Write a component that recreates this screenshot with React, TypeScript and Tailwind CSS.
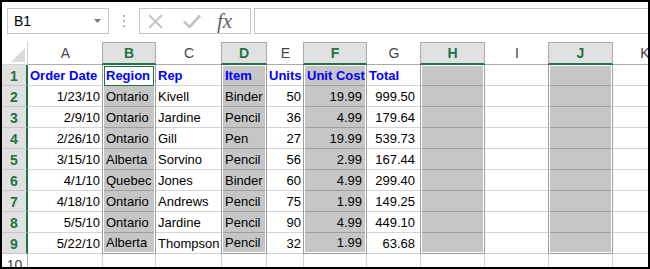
import React from 'react';

type Col = {
  key: string;
  width: string;
  sel: boolean;
  align: 'left' | 'right';
  pad: string;
};

const cols: Col[] = [
  { key: 'A', width: 'w-[75px]', sel: false, align: 'right', pad: 'pr-[2px]' },
  { key: 'B', width: 'w-[54px] -ml-px', sel: true, align: 'left', pad: 'pl-[2px]' },
  { key: 'C', width: 'w-[66px]', sel: false, align: 'left', pad: 'pl-[2px]' },
  { key: 'D', width: 'w-[46px] -ml-px', sel: true, align: 'left', pad: 'pl-[2px]' },
  { key: 'E', width: 'w-[37px]', sel: false, align: 'right', pad: 'pr-[2px]' },
  { key: 'F', width: 'w-[64px] -ml-px', sel: true, align: 'right', pad: 'pr-[3px]' },
  { key: 'G', width: 'w-[54px]', sel: false, align: 'right', pad: 'pr-[5px]' },
  { key: 'H', width: 'w-[65px] -ml-px', sel: true, align: 'right', pad: 'pr-[3px]' },
  { key: 'I', width: 'w-[64px]', sel: false, align: 'left', pad: 'pl-[2px]' },
  { key: 'J', width: 'w-[65px] -ml-px', sel: true, align: 'left', pad: 'pl-[2px]' },
  { key: 'K', width: 'w-[64px]', sel: false, align: 'left', pad: 'pl-[2px]' },
];

const titles = ['Order Date', 'Region', 'Rep', 'Item', 'Units', 'Unit Cost', 'Total'];

const rows = [
  ['1/23/10', 'Ontario', 'Kivell', 'Binder', '50', '19.99', '999.50'],
  ['2/9/10', 'Ontario', 'Jardine', 'Pencil', '36', '4.99', '179.64'],
  ['2/26/10', 'Ontario', 'Gill', 'Pen', '27', '19.99', '539.73'],
  ['3/15/10', 'Alberta', 'Sorvino', 'Pencil', '56', '2.99', '167.44'],
  ['4/1/10', 'Quebec', 'Jones', 'Binder', '60', '4.99', '299.40'],
  ['4/18/10', 'Ontario', 'Andrews', 'Pencil', '75', '1.99', '149.25'],
  ['5/5/10', 'Ontario', 'Jardine', 'Pencil', '90', '4.99', '449.10'],
  ['5/22/10', 'Alberta', 'Thompson', 'Pencil', '32', '1.99', '63.68'],
];

// heights inside a selected block: white inset eats a pixel at top and bottom
const selHeights = ['h-[20px]', 'h-[21px]', 'h-[21px]', 'h-[21px]', 'h-[21px]', 'h-[21px]', 'h-[21px]', 'h-[21px]', 'h-[19px]'];

const cellText = (ci: number, ri: number) => {
  if (ci > 6) return '';
  if (ri === 0) return titles[ci];
  return rows[ri - 1][ci];
};

const Cell = ({ col, ci, ri }: { col: Col; ci: number; ri: number }) => {
  const text = cellText(ci, ri);
  const header = ri === 0;
  return (
    <span
      className={`block w-full whitespace-nowrap overflow-visible ${
        header ? 'text-left pl-[2px] font-bold text-[#0000ff]' : `${col.align === 'right' ? 'text-right' : 'text-left'} ${col.pad} text-black`
      }`}
    >
      {text}
    </span>
  );
};

const Column = ({ col, ci }: { col: Col; ci: number }) => {
  if (!col.sel) {
    return (
      <div className={`flex flex-col shrink-0 ${col.width}`}>
        <div className="h-[23px] border-b border-[#ababab] flex items-center justify-center text-[14px] text-[#444]">
          {col.key}
        </div>
        {Array.from({ length: 10 }).map((_, ri) => (
          <div key={ri} className="h-[21px] shrink-0 border-b border-r border-[#d4d4d4] flex items-center pt-px">
            {ri < 9 && <Cell col={col} ci={ci} ri={ri} />}
          </div>
        ))}
      </div>
    );
  }
  return (
    <div className={`flex flex-col shrink-0 ${col.width}`}>
      <div className="h-[23px] bg-[#e1e1e1] border-t border-l border-r border-[#ababab] border-b-2 border-b-[#217346] flex items-center justify-center text-[14px] font-bold text-[#217346]">
        {col.key}
      </div>
      <div className="h-[189px] border-l border-r border-b border-[#9e9e9e] bg-white p-px flex flex-col">
        {selHeights.map((h, ri) => {
          const active = ci === 1 && ri === 0;
          return (
            <div
              key={ri}
              className={`${h} shrink-0 flex items-center ${ri < 8 ? 'border-b border-[#9e9e9e]' : ''} ${
                active ? 'bg-white outline outline-1 outline-[#217346] -outline-offset-1' : 'bg-[#c6c6c6]'
              }`}
            >
              <Cell col={col} ci={ci} ri={ri} />
            </div>
          );
        })}
      </div>
      <div className="h-[21px] shrink-0 border-l border-r border-b border-[#d4d4d4]" />
    </div>
  );
};

export default function App() {
  return (
    <div className="w-[650px] h-[269px] border-2 border-black bg-white overflow-hidden font-['Liberation_Sans',Arial,sans-serif] text-[13px] leading-none">
      {/* formula bar */}
      <div className="h-[40px] flex items-start pt-[6px] pl-[5px]">
        <div className="w-[102px] h-[26px] shrink-0 border border-[#c6c6c6] flex items-center justify-between pl-[6px] pr-[7px]">
          <span className="text-[14px] text-black">B1</span>
          <svg width="7" height="4" viewBox="0 0 7 4">
            <polygon points="0,0 7,0 3.5,4" fill="#7a7a7a" />
          </svg>
        </div>
        <div className="ml-[14px] mt-[7px] flex flex-col gap-[3px] shrink-0">
          <span className="w-[2px] h-[2px] bg-[#b4b4b4]" />
          <span className="w-[2px] h-[2px] bg-[#b4b4b4]" />
          <span className="w-[2px] h-[2px] bg-[#b4b4b4]" />
        </div>
        <div className="ml-[14px] w-[112px] h-[26px] shrink-0 border border-[#c6c6c6] flex items-center pl-[8px]">
          <svg width="15" height="15" viewBox="0 0 15 15" className="shrink-0">
            <path d="M1 1 L14 14 M14 1 L1 14" stroke="#c4c4c4" strokeWidth="1.8" fill="none" />
          </svg>
          <svg width="18" height="14" viewBox="0 0 18 14" className="ml-[20px] shrink-0">
            <path d="M1 7.5 L6.5 13 L17 1.5" stroke="#c4c4c4" strokeWidth="2.6" fill="none" />
          </svg>
          <span className="ml-[16px] italic font-['Liberation_Serif',serif] text-[21px] text-[#5f5f5f] leading-none">
            fx
          </span>
        </div>
        <div className="ml-[3px] w-[420px] h-[26px] shrink-0 border border-[#c6c6c6]" />
      </div>

      {/* sheet */}
      <div className="flex">
        <div className="w-[26px] shrink-0 flex flex-col">
          <div className="h-[23px] border-b border-r border-[#d4d4d4] flex items-end justify-end pr-[2px] pb-[2px]">
            <svg width="14" height="14" viewBox="0 0 14 14">
              <polygon points="14,0 14,14 0,14" fill="#dadada" />
            </svg>
          </div>
          {Array.from({ length: 9 }).map((_, i) => (
            <div
              key={i}
              className="h-[21px] shrink-0 bg-[#e1e1e1] border-b border-[#c6c6c6] border-r-2 border-r-[#217346] flex items-center justify-center pt-px text-[14px] font-bold text-[#217346]"
            >
              {i + 1}
            </div>
          ))}
          <div className="h-[21px] shrink-0 border-r border-[#ababab] flex items-center justify-center pt-px text-[14px] text-[#444]">
            10
          </div>
        </div>
        {cols.map((col, ci) => (
          <Column key={col.key} col={col} ci={ci} />
        ))}
      </div>
    </div>
  );
}
